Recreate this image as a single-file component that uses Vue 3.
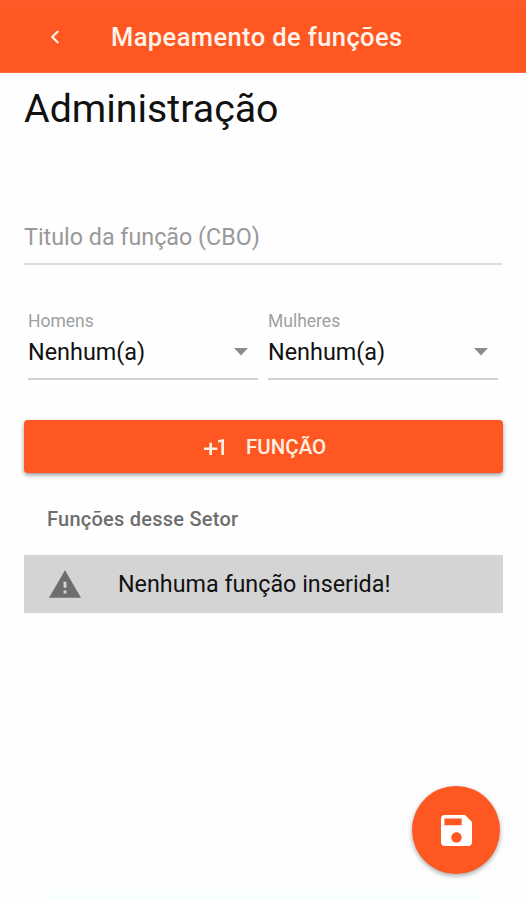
<script setup>
const selects = [
  { label: 'Homens', value: 'Nenhum(a)' },
  { label: 'Mulheres', value: 'Nenhum(a)' },
]
</script>

<template>
  <div class="screen">
    <header class="toolbar">
      <svg class="back" viewBox="0 0 10 14" aria-hidden="true">
        <path d="M8.3 1 2.3 7l6 6" fill="none" stroke="currentColor" stroke-width="2.200" />
      </svg>
      <span class="toolbar-title">Mapeamento de funções</span>
    </header>

    <main class="content">
      <h1 class="sector">Administração</h1>

      <div class="title-field"><span>Titulo da função (CBO)</span></div>

      <div class="selects">
        <div v-for="item in selects" :key="item.label" class="select">
          <span class="select-label">{{ item.label }}</span>
          <div class="select-row">
            <span class="select-value">{{ item.value }}</span>
            <svg class="arrow" viewBox="0 0 14 8" aria-hidden="true">
              <path d="M0 0h14L7 7.5z" fill="currentColor" />
            </svg>
          </div>
        </div>
      </div>

      <button class="add" type="button">
        <svg class="plus" viewBox="4 5 15 13" preserveAspectRatio="none" aria-hidden="true">
          <path d="M10 8H8v4H4v2h4v4h2v-4h4v-2h-4zm4.500-1.920V7.900l2.500-.5V18h2V5z" fill="currentColor" />
        </svg>
        <span class="add-text">FUNÇÃO</span>
      </button>

      <h2 class="subheader"><span>Funções desse Setor</span></h2>

      <div class="empty">
        <svg class="warning" viewBox="1 2 22 19" aria-hidden="true">
          <path d="M1 21h22L12 2zm12-3h-2v-2h2zm0-4h-2v-4h2z" fill="currentColor" />
        </svg>
        <span class="empty-text">Nenhuma função inserida!</span>
      </div>
    </main>

    <div class="bottom-glow"></div>

    <button class="save" type="button" aria-label="Salvar">
      <svg viewBox="3 3 18 18" aria-hidden="true">
        <path d="M17 3H5c-1.110 0-2 .9-2 2v14c0 1.100.89 2 2 2h14c1.100 0 2-.9 2-2V7zm-5 16c-1.660 0-3-1.340-3-3s1.340-3 3-3 3 1.340 3 3-1.340 3-3 3m3-10H5V5h10z" fill="currentColor" />
      </svg>
    </button>
  </div>
</template>

<style>
body {
  margin: 0;
  background: #fefefe;
}
</style>

<style scoped>
.screen {
  position: relative;
  box-sizing: border-box;
  width: 526px;
  height: 900px;
  overflow: hidden;
  background: #fefefe;
  font-family: Roboto, "Liberation Sans", sans-serif;
  color: #111;
  white-space: nowrap;
}
.toolbar {
  display: flex;
  align-items: center;
  box-sizing: border-box;
  height: 73px;
  padding: 1px 0 0 50px;
  background: linear-gradient(#ff5c2c, #ff5722 12px);
  border-bottom: 1px solid #fb6b3c;
  color: #fff3ea;
}
.back {
  width: 10px;
  height: 14px;
  margin-right: 51px;
}
.toolbar-title {
  padding-top: 1px;
  font-size: 25.500px;
  font-weight: 500;
  line-height: 30px;
  letter-spacing: 0.400px;
}
.content {
  padding: 0 24px;
}
.sector {
  margin: 12px 0 0;
  font-size: 39.300px;
  font-weight: 400;
  line-height: 48px;
}
.title-field {
  box-sizing: border-box;
  height: 43px;
  margin-top: 89px;
  border-bottom: 2px solid #dcdcdc;
  font-size: 23.300px;
  line-height: 30px;
  color: #999;
}
.selects {
  display: grid;
  grid-template-columns: 230px 230px;
  gap: 10px;
  padding: 44px 4px 0;
}
.select {
  box-sizing: border-box;
  height: 71px;
  border-bottom: 2px solid #d3d3d3;
}
.select-label {
  display: block;
  height: 26px;
  font-size: 17.500px;
  line-height: 24px;
  color: #a0a0a0;
}
.select-row {
  display: flex;
  align-items: center;
  justify-content: space-between;
  padding-right: 10px;
}
.select-value {
  font-size: 23.400px;
  line-height: 34px;
}
.arrow {
  width: 14px;
  height: 8px;
  color: #8c8c8c;
}
.add {
  display: flex;
  align-items: center;
  width: 479px;
  height: 53px;
  margin-top: 40px;
  padding: 0 0 0 180px;
  border: 0;
  border-radius: 4px;
  background: #ff5722;
  box-shadow: 0 2px 4px rgba(0, 0, 0, 0.4);
  color: #fff0e2;
  font-family: inherit;
}
.plus {
  width: 20px;
  height: 16px;
  margin-right: 22px;
}
.add-text {
  font-size: 20.500px;
  font-weight: 500;
}
.subheader {
  height: 82px;
  box-sizing: border-box;
  margin: 0;
  padding: 31px 0 0 23px;
  font-size: 20px;
  font-weight: 500;
  line-height: 30px;
  letter-spacing: 0.240px;
  color: #6e6e6e;
}
.empty {
  display: flex;
  align-items: center;
  box-sizing: border-box;
  width: 479px;
  height: 58px;
  padding-left: 25px;
  background: #d4d4d4;
}
.warning {
  width: 32px;
  height: 28px;
  margin-right: 37px;
  color: #6d6d6d;
}
.empty-text {
  font-size: 23.300px;
}
.bottom-glow {
  position: absolute;
  left: 48px;
  bottom: 0;
  width: 432px;
  height: 14px;
  background: linear-gradient(#fefefe, #f8fff8);
}
.save {
  position: absolute;
  left: 412px;
  top: 786px;
  display: flex;
  align-items: center;
  justify-content: center;
  width: 88px;
  height: 88px;
  padding: 0;
  border: 0;
  border-radius: 50%;
  background: #ff5722;
  box-shadow: 0 2px 5px rgba(0, 0, 0, 0.35);
  color: #fff;
}
.save svg {
  width: 31px;
  height: 31px;
}
</style>
